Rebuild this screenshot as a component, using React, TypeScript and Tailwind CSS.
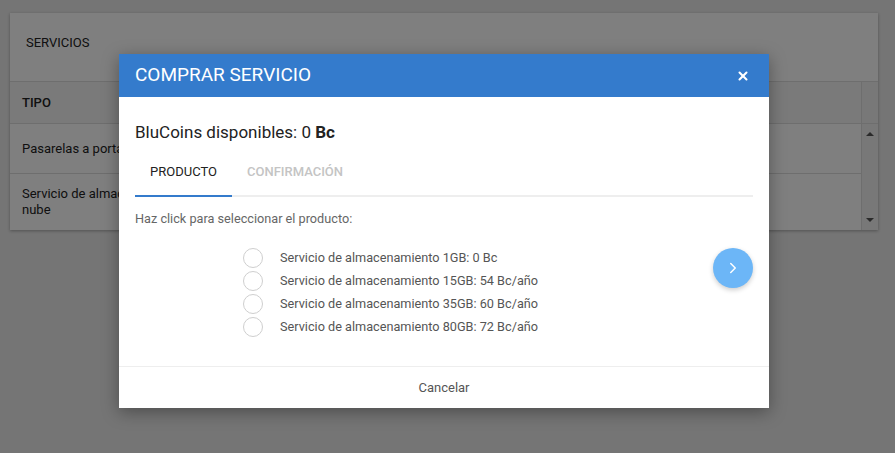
import { X, ChevronRight } from "lucide-react";

const products = [
  "Servicio de almacenamiento 1GB: 0 Bc",
  "Servicio de almacenamiento 15GB: 54 Bc/año",
  "Servicio de almacenamiento 35GB: 60 Bc/año",
  "Servicio de almacenamiento 80GB: 72 Bc/año",
];

function ServicesCard() {
  return (
    <div className="ml-[10px] mt-[13px] w-[868px] bg-white shadow-[0_1px_3px_rgba(0,0,0,0.3)]">
      <div className="flex h-[68px] items-center px-4 pb-[8px] text-[13px] text-[#222]">SERVICIOS</div>
      <div className="flex border-t border-[#ddd]">
        <div className="flex-1">
          <div className="flex h-[42px] items-center border-b border-[#ddd] bg-[#f4f4f4] pl-3 text-[13px] font-medium text-[#222]">
            TIPO
          </div>
          <div className="flex h-[50px] items-center border-b border-[#ddd] pl-3 text-[13px] text-[#222]">
            Pasarelas a portales de pago
          </div>
          <div className="flex h-[56px] items-center pl-3 text-[13px] leading-[16px] text-[#222]">
            Servicio de almacenamiento en la
            <br />
            nube
          </div>
        </div>
        <div className="flex w-[17px] flex-col border-l border-[#ddd] bg-[#f1f1f1]">
          <div className="h-[42px] border-b border-[#ddd]" />
          <div className="flex flex-1 flex-col items-center justify-between py-2">
            <span className="h-0 w-0 border-x-[4px] border-b-[4px] border-x-transparent border-b-[#555]" />
            <span className="h-0 w-0 border-x-[4px] border-t-[4px] border-x-transparent border-t-[#555]" />
          </div>
        </div>
      </div>
    </div>
  );
}

export default function App() {
  return (
    <div
      className="relative h-[453px] w-[895px] overflow-hidden bg-[#eaeaea]"
      style={{ fontFamily: "Roboto, 'Liberation Sans', sans-serif" }}
    >
      <ServicesCard />
      <div className="absolute inset-0 bg-black/50" />
      <div className="absolute left-[119px] top-[54px] flex w-[650px] flex-col bg-white shadow-[0_4px_16px_rgba(0,0,0,0.35)]">
        <div className="flex h-[43px] items-center justify-between bg-[#347bcc] pl-4 pr-[19px]">
          <span className="text-[19px] text-white">COMPRAR SERVICIO</span>
          <X className="h-[14px] w-[14px] text-white" strokeWidth={3.5} />
        </div>
        <div className="flex h-[269px] flex-col px-4 pt-[25px]">
          <div className="text-[17px] leading-[20px] text-[#222]">
            BluCoins disponibles: 0 <span className="font-bold">Bc</span>
          </div>
          <div className="mt-[7px] flex border-b-2 border-[#eee]">
            <div className="relative -mb-[2px] flex h-[48px] w-[97px] items-center justify-center border-b-2 border-[#347bcc] text-[13px] text-[#222]">
              PRODUCTO
            </div>
            <div className="flex h-[46px] items-center px-[15px] text-[13px] font-medium text-[#c4c4c4]">
              CONFIRMACIÓN
            </div>
          </div>
          <div className="mt-[14px] text-[12.7px] leading-[16px] text-[#666]">
            Haz click para seleccionar el producto:
          </div>
          <div className="mt-[19px] flex items-start justify-between">
            <div className="ml-[108px] flex flex-col">
              {products.map((p) => (
                <label key={p} className="flex h-[23px] items-center gap-[17px]">
                  <span className="h-[20px] w-[20px] rounded-full border border-[#cfcfcf] bg-white" />
                  <span className="text-[12.7px] text-[#555]">{p}</span>
                </label>
              ))}
            </div>
            <button
              type="button"
              className="mt-[2px] flex h-[40px] w-[40px] items-center justify-center rounded-full bg-[#6cb6f7] shadow-[0_2px_5px_rgba(0,0,0,0.2)]"
            >
              <ChevronRight className="h-[18px] w-[18px] text-white" strokeWidth={2} />
            </button>
          </div>
        </div>
        <div className="flex h-[42px] items-center justify-center border-t border-[#eee] text-[13px] text-[#555]">
          Cancelar
        </div>
      </div>
    </div>
  );
}
